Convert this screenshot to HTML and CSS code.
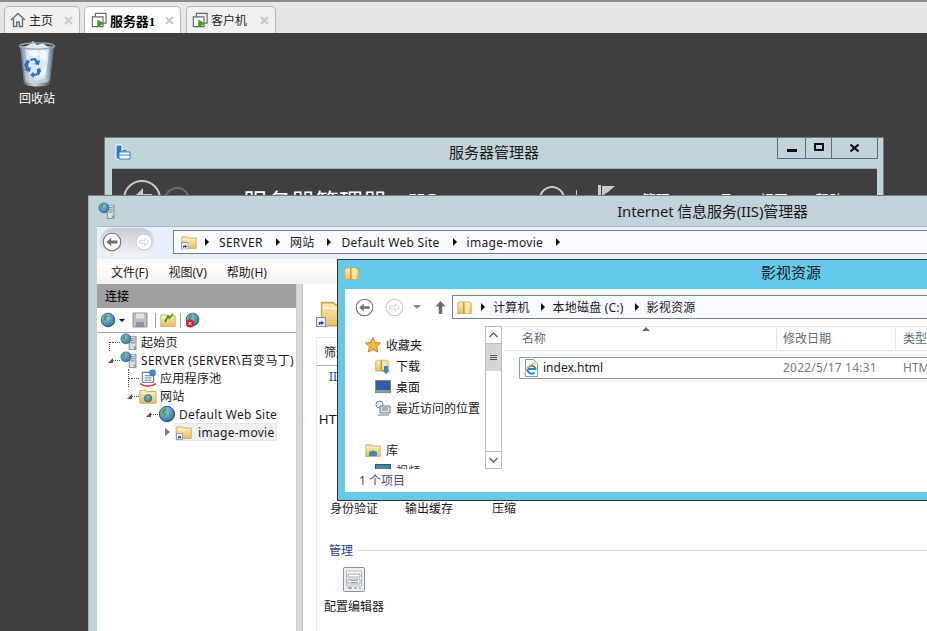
FILE: index.html
```html
<!DOCTYPE html>
<html lang="zh-CN">
<head>
  <meta charset="UTF-8">
  <title>服务器1</title>
  <link rel="stylesheet" href="styles.css">
</head>
<body>

  <svg class="defs" width="0" height="0">
    <defs>
      <linearGradient id="fold" x1="0" y1="0" x2="0" y2="1">
        <stop offset="0" stop-color="#fdeeb0"/><stop offset="1" stop-color="#e8bf62"/>
      </linearGradient>
      <radialGradient id="globe" cx="0.35" cy="0.3" r="0.8">
        <stop offset="0" stop-color="#9cd0f5"/><stop offset="1" stop-color="#1b5fae"/>
      </radialGradient>
      <linearGradient id="bin" x1="0" y1="0" x2="1" y2="0">
        <stop offset="0" stop-color="#7f95a7"/><stop offset="0.3" stop-color="#c6d8e6"/><stop offset="0.75" stop-color="#b4c8d8"/><stop offset="1" stop-color="#62768a"/>
      </linearGradient>
      <linearGradient id="binbase" x1="0" y1="0" x2="1" y2="0">
        <stop offset="0" stop-color="#5f676d"/><stop offset="0.4" stop-color="#d4d8da"/><stop offset="1" stop-color="#53595e"/>
      </linearGradient>
      <symbol id="folder" viewBox="0 0 20 20">
        <path d="M1 5V3.5h7L10 5h9v13H1z" fill="url(#fold)" stroke="#c9a450" stroke-width="1"/>
        <path d="M2 7h16" stroke="#fff6d0"/>
      </symbol>
      <symbol id="shortcut" viewBox="0 0 9 9">
        <rect x=".5" y=".5" width="8" height="8" fill="#f2f4fa" stroke="#8a8fa8"/>
        <path d="M2.500 7V4.600h2.300V3l2.400 2.400-2.400 2V6H3.800V7z" fill="#2a3f9a"/>
      </symbol>
      <symbol id="libfolder" viewBox="0 0 20 20">
        <path d="M1 18V4h2V2.500h14V4h2v14z" fill="url(#fold)" stroke="#c9a450"/>
        <path d="M9 2.500v15.500" stroke="#c69b3d" stroke-width="2"/>
        <path d="M11 3.500h5v14h-5z" fill="#fbe9a4"/>
      </symbol>
      <symbol id="earth" viewBox="0 0 20 20">
        <circle cx="10" cy="10" r="8.500" fill="url(#globe)" stroke="#164a86"/>
        <path d="M5 5l3-2 2 2-2 3 1 3-2 1-3-3zM13 11l3-1 .5 3-3 3-1.500-2z" fill="#4fa838"/>
      </symbol>
      <symbol id="srv" viewBox="0 0 10 17">
        <path d="M1 .500h8v16H1z" fill="#d9dfe4" stroke="#6c7680"/>
        <path d="M2.500 3.500h5M2.500 6h5M2.500 8.500h5" stroke="#6c7680"/>
        <rect x="6.500" y="13" width="2" height="2" fill="#4bb02d"/>
      </symbol>
      <symbol id="iisglobe" viewBox="0 0 20 20">
        <use href="#srv" x="9" y="3" width="10" height="16"/>
        <use href="#earth" x="0" y="0" width="13" height="13"/>
      </symbol>
      <symbol id="vm" viewBox="0 0 18 18">
        <path d="M5 5V1.500h12v11h-3" fill="none" stroke="#5d6b78" stroke-width="1.300"/>
        <path d="M1.500 5.500h12v11h-12z" fill="#fff" stroke="#5d6b78" stroke-width="1.300"/>
        <path d="M7 8.500l8 4.500-8 4.500z" fill="#4f9b12"/>
      </symbol>
      <symbol id="close" viewBox="0 0 9 9">
        <path d="M1 1l7 7M8 1l-7 7" stroke="#c9c9c9" stroke-width="2.200"/>
      </symbol>
      <symbol id="crumb" viewBox="0 0 6 8">
        <path d="M1 0l4 4-4 4z" fill="#111"/>
      </symbol>
      <symbol id="backarrow" viewBox="0 0 24 24">
        <circle cx="12" cy="12" r="10.500" fill="#fff" stroke="#6f6f6f" stroke-width="1.300"/>
        <path d="M5.500 12l5.500-5v3.300h7.500v3.400H11V17z" fill="#707070"/>
      </symbol>
      <symbol id="fwdarrow" viewBox="0 0 24 24">
        <circle cx="12" cy="12" r="10.500" fill="#fff" stroke="#c8c8c8" stroke-width="1.300"/>
        <path d="M18.500 12L13 7v3.300H5.500v3.400H13V17z" fill="#fff" stroke="#c8c8c8"/>
      </symbol>
    </defs>
  </svg>

  <div class="screen">
    <div class="tabbar">
      <div class="tab">
        <svg class="tab-icon" viewBox="0 0 16 16"><path d="M1 8l7-6.500L15 8M3.500 6.500V14.500h3.200V10h2.600v4.500h3.200V6.500" fill="none" stroke="#63727f" stroke-width="1.400"/></svg>
        <span class="tab-label">主页</span>
        <svg class="tab-close"><use href="#close"/></svg>
      </div>
      <div class="tab tab-active">
        <svg class="tab-icon"><use href="#vm"/></svg>
        <span class="tab-label">服务器1</span>
        <svg class="tab-close"><use href="#close"/></svg>
      </div>
      <div class="tab tab-last">
        <svg class="tab-icon"><use href="#vm"/></svg>
        <span class="tab-label">客户机</span>
        <svg class="tab-close"><use href="#close"/></svg>
      </div>
    </div>

    <div class="desktop">
      <div class="recycle">
        <svg class="recycle-icon" viewBox="0 0 38 46">
          <path d="M2 5l4 36c.3 3 6 4 13 4s12.700-1 13-4l4-36z" fill="url(#bin)"/>
          <path d="M7 6l5-3 3-3 4 4 6-2 6 5-1 12-3 18-8 3-7-5-3-15z" fill="#dce8f2"/>
          <path d="M10 11l7-3 5 5-6 4zM23 8l6 3-2 9-5-3zM21 31l6-6 1 8-6 3z" fill="#f5f9fc"/>
          <path d="M6 24l3-5 3 1-2 4 1 3 2-1-1 5-6-2 2-1zM12 18l5-1 3 3 2-1-1 5-5-1 2-1-2-3-3 1zM19 28l3-1 1 3-2 4-5 1v2l-4-3 3-3 1 2 3-1z" fill="#2d6fd0"/>
          <path d="M3 6l3.500 34M35 6l-3.500 34" stroke="#62768a" stroke-width="1" fill="none"/>
          <ellipse cx="19" cy="5" rx="17.500" ry="3.200" fill="none" stroke="#98a5af" stroke-width="1.300"/>
          <path d="M5.500 38c1 3.500 7 4.500 13.500 4.500S31.500 41.500 32.500 38l-.5 3.500C31.500 44.500 25.500 45.500 19 45.500S6.500 44.500 6 41.500z" fill="url(#binbase)"/>
        </svg>
        <span class="recycle-label">回收站</span>
      </div>

      <!-- 服务器管理器 -->
      <div class="window sm-window">
        <div class="sm-title">
          <svg class="sm-icon" viewBox="0 0 16 16">
            <path d="M1 1h6v14H1z" fill="#2b7cd3" stroke="#fff"/>
            <path d="M4 8h11v7H4z" fill="#fff" stroke="#2b7cd3"/>
            <path d="M4 11h11M8 8V6.500h3V8" fill="none" stroke="#2b7cd3"/>
          </svg>
          <span class="sm-name">服务器管理器</span>
          <div class="wincontrols">
            <div class="wc wc-min"><i></i></div>
            <div class="wc wc-max"><i></i></div>
            <div class="wc wc-close">
              <svg viewBox="0 0 9 8" width="9" height="8"><path d="M.5.500l8 7M8.500.500l-8 7" stroke="#111" stroke-width="2"/></svg>
            </div>
          </div>
        </div>
        <div class="sm-body">
          <div class="sm-nav">
            <div class="sm-back">
              <svg viewBox="0 0 34 34" width="34" height="34"><path d="M7 17L18 6v6h9v10h-9v6z" fill="#c9c9c9"/></svg>
            </div>
            <div class="sm-fwd"></div>
          </div>
          <div class="sm-heading">服务器管理器 • IIS</div>
          <div class="sm-tools">
            <div class="sm-refresh"></div>
            <i class="sm-pipe"></i>
            <svg class="sm-flag" viewBox="0 0 18 12"><path d="M0 0h3v12H0zM4 1h13L10 7 4 11z" fill="#c8c8c8"/></svg>
            <span class="sm-menu sm-menu-first">管理</span>
            <span class="sm-menu sm-menu-second">工具</span>
            <span class="sm-menu">视图</span>
            <span class="sm-menu">帮助</span>
          </div>
        </div>
      </div>

      <!-- IIS 管理器 -->
      <div class="window iis-window">
        <div class="iis-title">
          <svg class="iis-icon"><use href="#iisglobe"/></svg>
          <span class="iis-name">Internet 信息服务(IIS)管理器</span>
        </div>
        <div class="iis-client">
          <div class="iis-addr-row">
            <div class="nav-pill">
              <svg class="pill-btn"><use href="#backarrow"/></svg>
              <svg class="pill-btn pill-fwd"><use href="#fwdarrow"/></svg>
            </div>
            <div class="addrbox iis-addr">
              <svg class="addr-folder" viewBox="0 0 16 16">
                <use href="#folder" width="16" height="16"/>
                <use href="#shortcut" x="0" y="8" width="7.500" height="7.500"/>
              </svg>
              <svg class="crumb"><use href="#crumb"/></svg><span>SERVER</span>
              <svg class="crumb"><use href="#crumb"/></svg><span>网站</span>
              <svg class="crumb"><use href="#crumb"/></svg><span>Default Web Site</span>
              <svg class="crumb"><use href="#crumb"/></svg><span>image-movie</span>
              <svg class="crumb"><use href="#crumb"/></svg>
            </div>
          </div>
          <div class="iis-menu">
            <span>文件(F)</span><span>视图(V)</span><span>帮助(H)</span>
          </div>
          <div class="iis-main">
            <div class="conn">
              <div class="conn-head">连接</div>
              <div class="conn-tools">
                <svg class="ct-icon"><use href="#earth"/></svg>
                <i class="ct-drop"></i>
                <svg class="ct-icon ct-save" viewBox="0 0 16 16"><path d="M1 1h14v14H1z" fill="#b9bec2" stroke="#8e9499"/><path d="M4 1.500h8v5H4z" fill="#e3e5e7"/><path d="M4 10h8v5H4z" fill="#8e9499"/></svg>
                <i class="ct-sep"></i>
                <svg class="ct-icon" viewBox="0 0 16 16"><use href="#folder" width="16" height="16"/><path d="M5 10l3-6 1.500 2L13 2" fill="none" stroke="#3f9a24" stroke-width="1.800"/></svg>
                <i class="ct-sep"></i>
                <svg class="ct-icon" viewBox="0 0 16 16"><use href="#earth" width="15" height="15"/><circle cx="5" cy="11.500" r="4" fill="#c8242c"/><path d="M3.500 10l3 3M6.500 10l-3 3" stroke="#fff"/></svg>
              </div>
              <ul class="tree">
                <li class="tree-row lv0"><i class="tw-line tw-line-end"></i><i class="dots"></i><svg class="tree-icon"><use href="#iisglobe"/></svg><span>起始页</span></li>
                <li class="tree-row lv0"><i class="tw tw-open"></i><i class="dots"></i><svg class="tree-icon"><use href="#iisglobe"/></svg><span>SERVER (SERVER\百变马丁)</span></li>
                <li class="tree-row lv1"><i class="tw-line"></i><i class="dots"></i><svg class="tree-icon" viewBox="0 0 16 16"><path d="M3 3h10v9H3z" fill="#fff" stroke="#6e7f90"/><path d="M5 6h6M5 8h6M5 10h6" stroke="#6e7f90"/><path d="M1 13c4 3 10 3 14 0" fill="none" stroke="#c8443c" stroke-width="1.500"/><circle cx="12" cy="3.500" r="3" fill="#3f86d0"/></svg><span>应用程序池</span></li>
                <li class="tree-row lv1"><i class="tw tw-open"></i><i class="dots"></i><svg class="tree-icon" viewBox="0 0 16 16"><use href="#folder" width="16" height="16"/><use href="#earth" x="4" y="6" width="8" height="8"/></svg><span>网站</span></li>
                <li class="tree-row lv2"><i class="tw tw-open"></i><i class="dots"></i><svg class="tree-icon"><use href="#earth"/></svg><span>Default Web Site</span></li>
                <li class="tree-row lv3"><i class="tw-closed"></i><div class="tree-sel"><svg class="tree-icon" viewBox="0 0 16 16"><use href="#folder" width="16" height="16"/><use href="#shortcut" x="0" y="9" width="7" height="7"/></svg><span>image-movie</span></div></li>
              </ul>
            </div>
            <div class="splitter"></div>
            <div class="feature">
              <div class="feature-head">
                <svg class="feature-folder" viewBox="0 0 21 28">
                  <use href="#folder" width="40" height="32" y="-2"/>
                  <use href="#shortcut" x="0" y="18" width="10" height="10"/>
                </svg>
              </div>
              <div class="filter">筛选:</div>
              <div class="feature-body">
                <div class="group-iis">IIS</div>
                <div class="group-htt">HTTP</div>
                <div class="feature-labels">
                  <span class="fl-auth">身份验证</span>
                  <span class="fl-cache">输出缓存</span>
                  <span>压缩</span>
                </div>
                <div class="group-head"><span>管理</span><i></i></div>
                <div class="config">
                  <svg class="config-icon" viewBox="0 0 22 25">
                    <rect x=".5" y=".5" width="21" height="24" rx="1" fill="#eceff1" stroke="#8c9197"/>
                    <path d="M3.500 4h15v15h-15z" fill="#fff" stroke="#b3b8bd"/>
                    <path d="M5 7h12v3H5z" fill="#fff" stroke="#a3a8ad"/>
                    <path d="M5 12h12v5H5z" fill="#f6f7f8" stroke="#a3a8ad"/>
                    <path d="M7 13.500h8M7 15.500h8" stroke="#9ea3a8"/>
                    <path d="M5 21h4" stroke="#35b4ea" stroke-width="1.500"/>
                    <path d="M11 21h3M16 21h2" stroke="#a7acb1" stroke-width="1.500"/>
                  </svg>
                  <span>配置编辑器</span>
                </div>
              </div>
            </div>
          </div>
        </div>
      </div>

      <!-- 资源管理器 -->
      <div class="window ex-window">
        <div class="ex-title">
          <svg class="ex-icon"><use href="#libfolder"/></svg>
          <span class="ex-name">影视资源</span>
        </div>
        <div class="ex-client">
          <div class="ex-addr-row">
            <svg class="ex-nav"><use href="#backarrow"/></svg>
            <svg class="ex-nav ex-fwd"><use href="#fwdarrow"/></svg>
            <i class="ex-drop"></i>
            <svg class="ex-up" viewBox="0 0 11 13"><path d="M5.500 0l5 5.500H7.200V13H3.800V5.500H.5z" fill="#6a6a6a"/></svg>
            <div class="addrbox ex-addr">
              <svg class="addr-folder"><use href="#libfolder"/></svg>
              <svg class="crumb"><use href="#crumb"/></svg><span>计算机</span>
              <svg class="crumb"><use href="#crumb"/></svg><span>本地磁盘 (C:)</span>
              <svg class="crumb"><use href="#crumb"/></svg><span>影视资源</span>
            </div>
          </div>
          <div class="ex-main">
            <div class="ex-side">
              <div class="side-list">
                <div class="side-row side-head">
                  <svg class="side-icon" viewBox="0 0 16 16"><path d="M8 .5l2.300 5 5.200.6-3.900 3.500 1.100 5.400L8 12.300 3.300 15l1.100-5.400L.5 6.100l5.200-.6z" fill="#f6b93a" stroke="#d2772c"/></svg>
                  <span>收藏夹</span>
                </div>
                <div class="side-row">
                  <svg class="side-icon" viewBox="0 0 16 16"><use href="#libfolder" width="14" height="15"/><path d="M9 8h4v4h2l-4 4-4-4h2z" fill="#2f86d0"/></svg>
                  <span>下载</span>
                </div>
                <div class="side-row">
                  <svg class="side-icon" viewBox="0 0 16 14"><rect x=".5" y=".5" width="15" height="12" fill="#2d5ea8" stroke="#7c8794"/><path d="M1 10h14v2H1z" fill="#8e9aa6"/></svg>
                  <span>桌面</span>
                </div>
                <div class="side-row">
                  <svg class="side-icon" viewBox="0 0 16 16"><circle cx="4.500" cy="4.500" r="3.500" fill="#eef1f4" stroke="#6e7a85"/><path d="M5 6h10v7H5z" fill="#dfe6ea" stroke="#6e7a85"/><path d="M7 8h6M7 10h6M3 15h11" stroke="#6e7a85"/></svg>
                  <span>最近访问的位置</span>
                </div>
              </div>
              <div class="side-list side-lib">
                <div class="side-row side-head">
                  <svg class="side-icon" viewBox="0 0 16 16"><use href="#folder" width="16" height="16"/><path d="M4 14V10q4-3 8 0v4z" fill="#3d87c4"/></svg>
                  <span>库</span>
                </div>
                <div class="side-row">
                  <svg class="side-icon" viewBox="0 0 16 14"><rect x=".5" y=".5" width="15" height="13" fill="#4a83a8" stroke="#33566e"/></svg>
                  <span>视频</span>
                </div>
              </div>
            </div>
            <div class="ex-scroll">
              <div class="sb-btn"><svg viewBox="0 0 9 6" width="9" height="6"><path d="M.5 5L4.500 1l4 4" fill="none" stroke="#606060" stroke-width="1.300"/></svg></div>
              <div class="sb-thumb"><i></i><i></i><i></i></div>
              <div class="sb-track"></div>
              <div class="sb-btn sb-btn-down"><svg viewBox="0 0 9 6" width="9" height="6"><path d="M.5 1L4.500 5l4-4" fill="none" stroke="#606060" stroke-width="1.300"/></svg></div>
            </div>
            <div class="ex-files">
              <div class="col-heads">
                <div class="col col-name">名称<i class="sort-mark"></i></div>
                <div class="col col-date">修改日期</div>
                <div class="col col-type">类型</div>
              </div>
              <div class="file-row">
                <svg class="file-icon" viewBox="0 0 16 18">
                  <path d="M2.500.5h8l4 4v13h-12z" fill="#fff" stroke="#8f959a"/>
                  <path d="M4.500 10h8A4 4 0 1 0 11.500 13.500" fill="none" stroke="#1c8ad8" stroke-width="1.900"/>
                  <path d="M1.500 16C2.500 10 8 4 14 3.500" fill="none" stroke="#e8b923" stroke-width="1.200"/>
                </svg>
                <span class="file-name">index.html</span>
                <span class="file-date">2022/5/17 14:31</span>
                <span class="file-type">HTM</span>
              </div>
            </div>
          </div>
          <div class="ex-status"><span>1 个项目</span></div>
        </div>
      </div>
    </div>
  </div>

</body>
</html>
```

FILE: styles.css
```css
* {
  box-sizing: border-box;
}

body {
  margin: 0;
  font-family: "Noto Sans", "Noto Sans CJK SC", sans-serif;
  font-size: 12px;
  color: #1a1a1a;
  overflow: hidden;
}

ul {
  margin: 0;
  padding: 0;
  list-style: none;
}

i {
  display: block;
}

.defs {
  position: absolute;
}

.screen {
  width: 927px;
  height: 631px;
  display: flex;
  flex-direction: column;
  overflow: hidden;
}

/* tabs */
.tabbar {
  height: 33px;
  flex: none;
  display: flex;
  align-items: flex-end;
  padding-left: 4px;
  gap: 4px;
  background: #e7e7e9;
  border-top: 2px solid #8a8a8a;
}

.tab {
  width: 76px;
  height: 27px;
  display: flex;
  align-items: center;
  padding: 0 6px 0 5px;
  background: #f1f1f2;
  border: 1px solid #b4b7ba;
  border-bottom: none;
  border-radius: 5px 5px 0 0;
}

.tab-active {
  width: 97px;
  padding-left: 6px;
  background: #fff;
  font-weight: 700;
}

.tab-last {
  width: 90px;
  margin-left: 1px;
}

.tab-icon {
  width: 16px;
  height: 16px;
  flex: none;
  margin-right: 3px;
}

.tab-label {
  flex: 1;
  white-space: nowrap;
  font-size: 12px;
  color: #222;
}

.tab-active .tab-label {
  font-family: "Liberation Serif", "Noto Sans CJK SC", serif;
  color: #000;
  font-weight: 700;
  font-size: 13px;
  letter-spacing: -.1px;
}

.tab-close {
  width: 9px;
  height: 9px;
  flex: none;
}

/* desktop */
.desktop {
  flex: 1;
  position: relative;
  background: #3f3f3f;
  overflow: hidden;
}

.recycle {
  position: absolute;
  left: 7px;
  top: 8px;
  width: 60px;
  display: flex;
  flex-direction: column;
  align-items: center;
}

.recycle-icon {
  width: 38px;
  height: 46px;
}

.recycle-label {
  margin-top: 4px;
  color: #fff;
  line-height: 16px;
}

.window {
  position: absolute;
}

/* server manager, mostly hidden */
.sm-window {
  left: 104px;
  top: 104px;
  width: 780px;
  height: 300px;
  background: #c1d4da;
  border: 1px solid #6d7a80;
  border-bottom: none;
}

.sm-title {
  height: 30px;
  position: relative;
  display: flex;
  justify-content: center;
  padding-top: 4px;
}

.sm-icon {
  position: absolute;
  left: 10px;
  top: 6px;
  width: 16px;
  height: 16px;
}

.sm-name {
  font-size: 15px;
  line-height: 20px;
}

.wincontrols {
  position: absolute;
  right: 5px;
  top: 0;
  height: 21px;
  display: flex;
  border: 1px solid #5f6b70;
  border-top: none;
}

.wc {
  height: 20px;
  display: flex;
  align-items: center;
  justify-content: center;
  border-left: 1px solid #5f6b70;
}

.wc-min {
  width: 27px;
  border-left: none;
}

.wc-min i {
  width: 10px;
  height: 3px;
  background: #111;
  margin-top: 5px;
}

.wc-max {
  width: 26px;
}

.wc-max i {
  width: 10px;
  height: 8px;
  border: 2px solid #111;
  margin-bottom: 2px;
}

.wc-close {
  width: 46px;
}

.sm-body {
  height: 200px;
  margin: 0 6px 0 7px;
  background: #3f3f3f;
  display: flex;
  padding: 11px 0 0 11px;
  border-top: 1px solid #9fb0b6;
}

.sm-nav {
  display: flex;
  width: 120px;
  flex: none;
}

.sm-back {
  width: 38px;
  height: 38px;
  border: 2px solid #c9c9c9;
  border-radius: 50%;
}

.sm-fwd {
  width: 26px;
  height: 26px;
  margin: 7px 0 0 3px;
  border: 2px solid #6b6b6b;
  border-radius: 50%;
}

.sm-heading {
  font-size: 24px;
  line-height: 30px;
  margin-top: 7px;
  color: #fff;
  width: 296px;
  flex: none;
  white-space: nowrap;
}

.sm-tools {
  display: flex;
  margin-top: 6px;
}

.sm-refresh {
  width: 26px;
  height: 26px;
  border: 2px solid #c9c9c9;
  border-radius: 50%;
}

.sm-pipe {
  width: 1px;
  height: 26px;
  margin: 4px 21px 0 11px;
  background: #c9c9c9;
}

.sm-flag {
  width: 18px;
  height: 12px;
  margin-top: -1px;
}

.sm-menu {
  font-size: 14px;
  line-height: 20px;
  color: #fff;
  margin: 4px 0 0 27px;
  white-space: nowrap;
}

.sm-menu-first {
  margin-left: 26px;
}

.sm-menu-second {
  margin-left: 35px;
}

/* iis manager */
.iis-window {
  left: 88px;
  top: 162px;
  width: 1248px;
  height: 440px;
  background: #c1d4da;
  border-top: 1px solid #6d7a80;
  border-left: 1px solid #9fb0b6;
  padding: 0 8px;
}

.iis-title {
  height: 30px;
  position: relative;
  display: flex;
  justify-content: center;
  padding-top: 5px;
}

.iis-icon {
  position: absolute;
  left: 1px;
  top: 6px;
  width: 18px;
  height: 18px;
}

.iis-name {
  font-size: 15px;
  line-height: 20px;
  letter-spacing: -.15px;
}

.iis-client {
  height: 410px;
  background: #fff;
  display: flex;
  flex-direction: column;
  border-top: 1px solid #a9b3d0;
}

.iis-addr-row {
  height: 32px;
  display: flex;
  align-items: center;
  background: #e8eefc;
  padding: 0 0 2px 3px;
}

.nav-pill {
  width: 54px;
  height: 29px;
  display: flex;
  align-items: center;
  padding-left: 2px;
  gap: 13px;
  background: linear-gradient(#c9ccd2, #e2e5ec 60%, #eef2fb);
  border-radius: 13px;
  margin-right: 19px;
}

.pill-btn {
  width: 20px;
  height: 20px;
}

.pill-fwd {
  width: 18px;
  height: 18px;
}

.addrbox {
  display: flex;
  align-items: center;
  background: #fafbff;
  border: 1px solid #7a7d8a;
  white-space: nowrap;
  flex: 1;
  color: #1a1a1a;
}

.iis-addr {
  height: 24px;
  padding-left: 7px;
  letter-spacing: .3px;
}

.addr-folder {
  width: 16px;
  height: 16px;
  flex: none;
  margin-right: -5px;
}

.crumb {
  width: 6px;
  height: 8px;
  flex: none;
  margin: 0 9px 0 12px;
}

.iis-menu {
  height: 25px;
  display: flex;
  align-items: center;
  padding-left: 14px;
  gap: 20px;
  background: linear-gradient(#f8f8f8, #fff 30%, #f1f1f1);
}

.iis-main {
  flex: 1;
  display: flex;
  min-height: 0;
}

.conn {
  width: 200px;
  flex: none;
  border-right: 1px solid #d0d0d0;
}

.conn-head {
  height: 24px;
  background: #a0a0a0;
  padding-left: 8px;
  line-height: 25px;
  color: #111;
  font-weight: 500;
}

.conn-tools {
  height: 25px;
  display: flex;
  align-items: center;
  padding-left: 3px;
  border-bottom: 1px solid #a0a0a0;
}

.ct-icon {
  width: 16px;
  height: 16px;
  flex: none;
}

.ct-drop {
  width: 0;
  height: 0;
  margin: 0 7px 0 3px;
  border: 3px solid transparent;
  border-top: 3px solid #111;
  border-bottom: none;
}

.ct-save {
  margin-right: 3px;
}

.ct-sep {
  width: 1px;
  height: 15px;
  background: #a0a0a0;
  margin: 0 4px;
}

.tree-row {
  height: 18px;
  display: flex;
  align-items: center;
  white-space: nowrap;
  letter-spacing: .3px;
}

.lv0 {
  padding-left: 10px;
}

.lv1 {
  padding-left: 29px;
}

.lv2 {
  padding-left: 48px;
}

.lv3 {
  padding-left: 68px;
}

.tw {
  width: 6px;
  height: 6px;
  flex: none;
}

.tw-open {
  border-right: 5px solid #555;
  border-top: 5px solid transparent;
  margin-left: 1px;
  width: 5px;
  height: 5px;
  margin-right: 0;
}

.tw-closed {
  width: 0;
  height: 0;
  flex: none;
  border-left: 5px solid #777;
  border-top: 4px solid transparent;
  border-bottom: 4px solid transparent;
}

.tw-line {
  width: 4px;
  margin-left: 2px;
  flex: none;
  align-self: stretch;
  border-left: 1px dotted #555;
  background: repeating-linear-gradient(90deg, #555 0 1px, transparent 1px 2px) center / 100% 1px no-repeat;
}

.tw-line-end {
  height: 9px;
  align-self: flex-end;
  border-top: 1px dotted #555;
  background: none;
}

.dots {
  width: 7px;
  height: 1px;
  flex: none;
  border-top: 1px dotted #555;
}

.tree-icon {
  width: 18px;
  height: 18px;
  flex: none;
  margin-right: 3px;
}

.tree-sel {
  display: flex;
  align-items: center;
  height: 18px;
  width: 102px;
  margin-left: 5px;
  gap: 6px;
  background: #f0f0f0;
  border: 1px solid #e6e6e6;
}

.tree-sel .tree-icon {
  width: 16px;
  height: 16px;
  margin: 0;
}

.splitter {
  width: 6px;
  flex: none;
  background: #d9d9d9;
  border-right: 1px solid #c2c2c2;
}

.feature {
  flex: 1;
  min-width: 0;
  padding-left: 13px;
}

.feature-head {
  height: 53px;
  padding-top: 15px;
}

.feature-folder {
  width: 21px;
  height: 28px;
  display: block;
}

.filter {
  height: 29px;
  padding-left: 7px;
  line-height: 29px;
  border-left: 1px solid #ececec;
  border-top: 1px solid #e4e4e4;
  border-bottom: 1px solid #a8a8a8;
}

.feature-body {
  border-left: 1px solid #ececec;
  height: 300px;
}

.group-iis {
  padding: 3px 0 0 12px;
  line-height: 16px;
  color: #1d3e9e;
  height: 46px;
}

.group-htt {
  line-height: 16px;
  padding-left: 2px;
  height: 88px;
  font-family: "Liberation Sans", sans-serif;
  font-size: 13px;
  color: #111;
}

.feature-labels {
  display: flex;
  padding-left: 13px;
  line-height: 17px;
  height: 42px;
}

.fl-auth {
  width: 75px;
}

.fl-cache {
  width: 87px;
}

.group-head {
  display: flex;
  align-items: center;
  padding-left: 12px;
  height: 16px;
  color: #1d3e9e;
}

.group-head i {
  flex: 1;
  height: 1px;
  margin-left: 4px;
  background: #d6e4f2;
}

.config {
  width: 60px;
  margin: 9px 0 0 7px;
  display: flex;
  flex-direction: column;
  align-items: center;
  white-space: nowrap;
  line-height: 17px;
}

.config-icon {
  width: 22px;
  height: 25px;
  margin-bottom: 6px;
}

/* explorer */
.ex-window {
  left: 337px;
  top: 226px;
  width: 908px;
  height: 242px;
  background: #65c9ea;
  border: 1px solid #333;
  padding: 0 7px 7px;
}

.ex-title {
  height: 29px;
  position: relative;
  display: flex;
  justify-content: center;
  padding-top: 2px;
}

.ex-icon {
  position: absolute;
  left: -1px;
  top: 5px;
  width: 15px;
  height: 17px;
}

.ex-name {
  font-size: 15px;
  line-height: 20px;
}

.ex-client {
  height: 203px;
  background: #fff;
  display: flex;
  flex-direction: column;
}

.ex-addr-row {
  height: 37px;
  flex: none;
  display: flex;
  align-items: center;
  padding: 0 0 1px 10px;
}

.ex-nav {
  width: 19px;
  height: 19px;
  flex: none;
}

.ex-fwd {
  margin-left: 11px;
}

.ex-drop {
  width: 0;
  height: 0;
  margin: 0 0 0 9px;
  border: 4px solid transparent;
  border-top: 4px solid #8a8a8a;
  border-bottom: none;
}

.ex-up {
  width: 11px;
  height: 13px;
  margin: 0 6px 0 14px;
  flex: none;
}

.ex-addr {
  height: 24px;
  padding-left: 4px;
  letter-spacing: .2px;
}

.ex-addr .addr-folder {
  width: 15px;
  height: 17px;
  margin-right: 0;
}

.ex-addr .crumb {
  margin: 0 7px 0 10px;
}

.ex-addr .addr-folder + .crumb {
  margin-left: 8px;
}

.ex-main {
  flex: 1;
  min-height: 0;
  display: flex;
}

.ex-side {
  width: 140px;
  height: 143px;
  flex: none;
  overflow: hidden;
}

.side-list {
  padding: 8px 0 0 20px;
}

.side-lib {
  padding-top: 21px;
}

.side-row {
  height: 21px;
  display: flex;
  align-items: center;
  padding-left: 10px;
  white-space: nowrap;
}

.side-head {
  padding-left: 0;
}

.side-icon {
  width: 16px;
  height: 16px;
  flex: none;
  margin-right: 5px;
}

.ex-scroll {
  width: 17px;
  height: 143px;
  flex: none;
  display: flex;
  flex-direction: column;
  border: 1px solid #bcbcbc;
}

.sb-btn {
  height: 17px;
  flex: none;
  display: flex;
  align-items: center;
  justify-content: center;
  border-bottom: 1px solid #bcbcbc;
}

.sb-btn-down {
  border-bottom: none;
  border-top: 1px solid #bcbcbc;
}

.sb-thumb {
  height: 27px;
  flex: none;
  background: #d6d6d6;
  display: flex;
  flex-direction: column;
  align-items: center;
  justify-content: center;
  gap: 1px;
}

.sb-thumb i {
  width: 7px;
  height: 1px;
  background: #555;
  margin: 0;
}

.sb-track {
  flex: 1;
  background: #fff;
}

.ex-files {
  flex: 1;
  min-width: 0;
  padding-left: 2px;
}

.col-heads {
  height: 25px;
  display: flex;
  border-top: 1px solid #e6e6e6;
  border-bottom: 1px solid #e6e6e6;
  color: #5c6b7a;
  line-height: 23px;
}

.col {
  position: relative;
}

.col-name {
  width: 273px;
  padding-left: 18px;
  border-right: 1px solid #e6e6e6;
}

.sort-mark {
  position: absolute;
  left: 138px;
  top: 0;
  width: 0;
  height: 0;
  border: 4px solid transparent;
  border-bottom: 4px solid #5a6b85;
  border-top: none;
}

.col-date {
  width: 119px;
  padding-left: 6px;
  border-right: 1px solid #e6e6e6;
}

.col-type {
  padding-left: 7px;
}

.file-row {
  height: 22px;
  margin: 6px 0 0 15px;
  display: flex;
  align-items: center;
  padding: 0 0 2px 3px;
  border: 1px solid #7fa0cc;
  border-right: none;
  white-space: nowrap;
}

.file-icon {
  width: 16px;
  height: 18px;
  flex: none;
  margin: 2px 4px 0 0;
}

.file-name {
  width: 240px;
}

.file-date {
  width: 120px;
  color: #7b7b7b;
  letter-spacing: .2px;
}

.file-type {
  color: #7b7b7b;
}

.ex-status {
  height: 23px;
  flex: none;
  padding-left: 14px;
  line-height: 24px;
  background: #fff;
  color: #4b4a82;
}

.ex-status span {
  display: block;
  width: 60px;
}
```
